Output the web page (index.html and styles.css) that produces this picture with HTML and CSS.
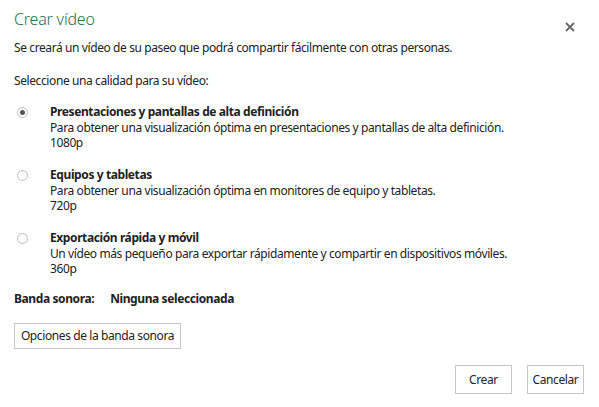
FILE: index.html
```html
<!DOCTYPE html>
<html lang="es">
<head>
<meta charset="utf-8">
<title>Crear vídeo</title>
<link rel="stylesheet" href="styles.css">
</head>
<body>
<div class="dialog">
  <div class="header">
    <h1 class="title">Crear vídeo</h1>
    <button class="close" aria-label="Cerrar">
      <svg width="10" height="10" viewBox="0 0 10 10"><path d="M1 1L9 9M9 1L1 9" stroke="#666" stroke-width="1.8" fill="none"/></svg>
    </button>
  </div>
  <p class="intro">Se creará un vídeo de su paseo que podrá compartir fácilmente con otras personas.</p>
  <p class="prompt">Seleccione una calidad para su vídeo:</p>
  <div class="options">
    <label class="option">
      <span class="radio checked"></span>
      <span class="opt-text">
        <span class="opt-title">Presentaciones y pantallas de alta definición</span>
        <span class="opt-desc">Para obtener una visualización óptima en presentaciones y pantallas de alta definición.</span>
        <span class="opt-res">1080p</span>
      </span>
    </label>
    <label class="option">
      <span class="radio"></span>
      <span class="opt-text">
        <span class="opt-title">Equipos y tabletas</span>
        <span class="opt-desc">Para obtener una visualización óptima en monitores de equipo y tabletas.</span>
        <span class="opt-res">720p</span>
      </span>
    </label>
    <label class="option">
      <span class="radio"></span>
      <span class="opt-text">
        <span class="opt-title">Exportación rápida y móvil</span>
        <span class="opt-desc">Un vídeo más pequeño para exportar rápidamente y compartir en dispositivos móviles.</span>
        <span class="opt-res">360p</span>
      </span>
    </label>
  </div>
  <div class="soundtrack">
    <span class="st-label">Banda sonora:</span>
    <span class="st-value">Ninguna seleccionada</span>
  </div>
  <button class="btn btn-options">Opciones de la banda sonora</button>
  <div class="footer">
    <button class="btn btn-action">Crear</button>
    <button class="btn btn-action">Cancelar</button>
  </div>
</div>
</body>
</html>
```

FILE: styles.css
```css
* { box-sizing: border-box; }
html, body { margin: 0; padding: 0; background: #fff; }
body {
  font-family: "Segoe UI", "Noto Sans", "Open Sans", sans-serif;
  font-size: 12px;
  letter-spacing: -0.4px;
  color: #222;
  width: 599px;
  height: 407px;
  overflow: hidden;
}
.dialog {
  padding: 8px 15px 0 14px;
  display: flex;
  flex-direction: column;
}
.header {
  display: flex;
  justify-content: space-between;
  align-items: flex-start;
  height: 26px;
}
.title {
  margin: 0;
  font-weight: 300;
  font-size: 16px;
  line-height: 22px;
  letter-spacing: -0.2px;
  color: #217346;
}
.close {
  border: 0;
  background: none;
  padding: 0;
  margin: 14px 9px 0 0;
  width: 10px;
  height: 10px;
  display: flex;
}
.intro, .prompt {
  margin: 0;
  line-height: 16px;
}
.intro { margin-top: 6px; }
.prompt { margin-top: 17px; }
.options {
  display: flex;
  flex-direction: column;
  gap: 16.5px;
  margin-top: 15px;
}
.option {
  display: flex;
  align-items: flex-start;
}
.radio {
  width: 11px;
  height: 11px;
  border: 1px solid #bcbcbc;
  border-radius: 50%;
  margin: 3px 0 0 3px;
  flex: none;
  display: flex;
  align-items: center;
  justify-content: center;
}
.radio.checked::after {
  content: "";
  width: 5px;
  height: 5px;
  border-radius: 50%;
  background: #555;
}
.opt-text {
  margin-left: 22px;
  display: flex;
  flex-direction: column;
  line-height: 15.5px;
}
.opt-title { font-weight: 700; }
.soundtrack {
  margin-top: 14px;
  display: flex;
  gap: 16px;
  line-height: 16px;
  font-weight: 700;
}
.btn {
  font-family: inherit;
  font-size: 12px;
  letter-spacing: -0.4px;
  color: #222;
  background: #fff;
  border: 1px solid #c6c6c6;
  padding: 0;
}
.btn-options {
  align-self: flex-start;
  margin-top: 16px;
  width: 167px;
  height: 26px;
}
.footer {
  display: flex;
  justify-content: flex-end;
  gap: 15px;
  margin-top: 16px;
}
.btn-action {
  width: 57px;
  height: 29px;
}
```
